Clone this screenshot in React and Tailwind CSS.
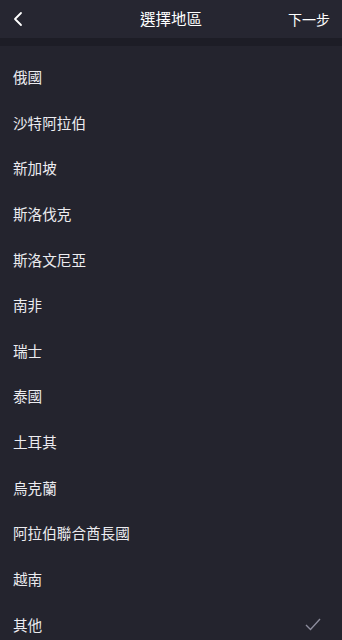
import { ChevronLeft } from "lucide-react";

const regions = [
  "俄國",
  "沙特阿拉伯",
  "新加坡",
  "斯洛伐克",
  "斯洛文尼亞",
  "南非",
  "瑞士",
  "泰國",
  "土耳其",
  "烏克蘭",
  "阿拉伯聯合酋長國",
  "越南",
  "其他",
];

export default function App() {
  const selected = "其他";

  return (
    <div
      className="h-[640px] w-[342px] overflow-hidden bg-[#24242e] text-[#ececf0]"
      style={{ fontFamily: '"Noto Sans CJK TC", "Noto Sans", sans-serif' }}
    >
      <div className="relative flex h-[38px] items-center justify-between bg-[#262631] px-3">
        <ChevronLeft className="h-6 w-6 -ml-1.5 text-white" strokeWidth={1.8} />
        <span className="absolute left-1/2 -translate-x-1/2 text-[15.5px] text-white">選擇地區</span>
        <span className="text-[14px] text-white">下一步</span>
      </div>
      <div className="h-2 bg-[#1d1d26]" />
      <ul className="pt-[8px]">
        {regions.map((r) => (
          <li key={r} className="flex h-[45.67px] items-center justify-between pl-[13px] pr-[21px] text-[14.6px]">
            <span>{r}</span>
            {r === selected && (
              <svg width="16" height="13" viewBox="0 0 16 13" fill="none" className="text-[#8c8c9c]">
                <path d="M1 7l4.5 4.5L15 1" stroke="currentColor" strokeWidth="1.4" />
              </svg>
            )}
          </li>
        ))}
      </ul>
    </div>
  );
}
